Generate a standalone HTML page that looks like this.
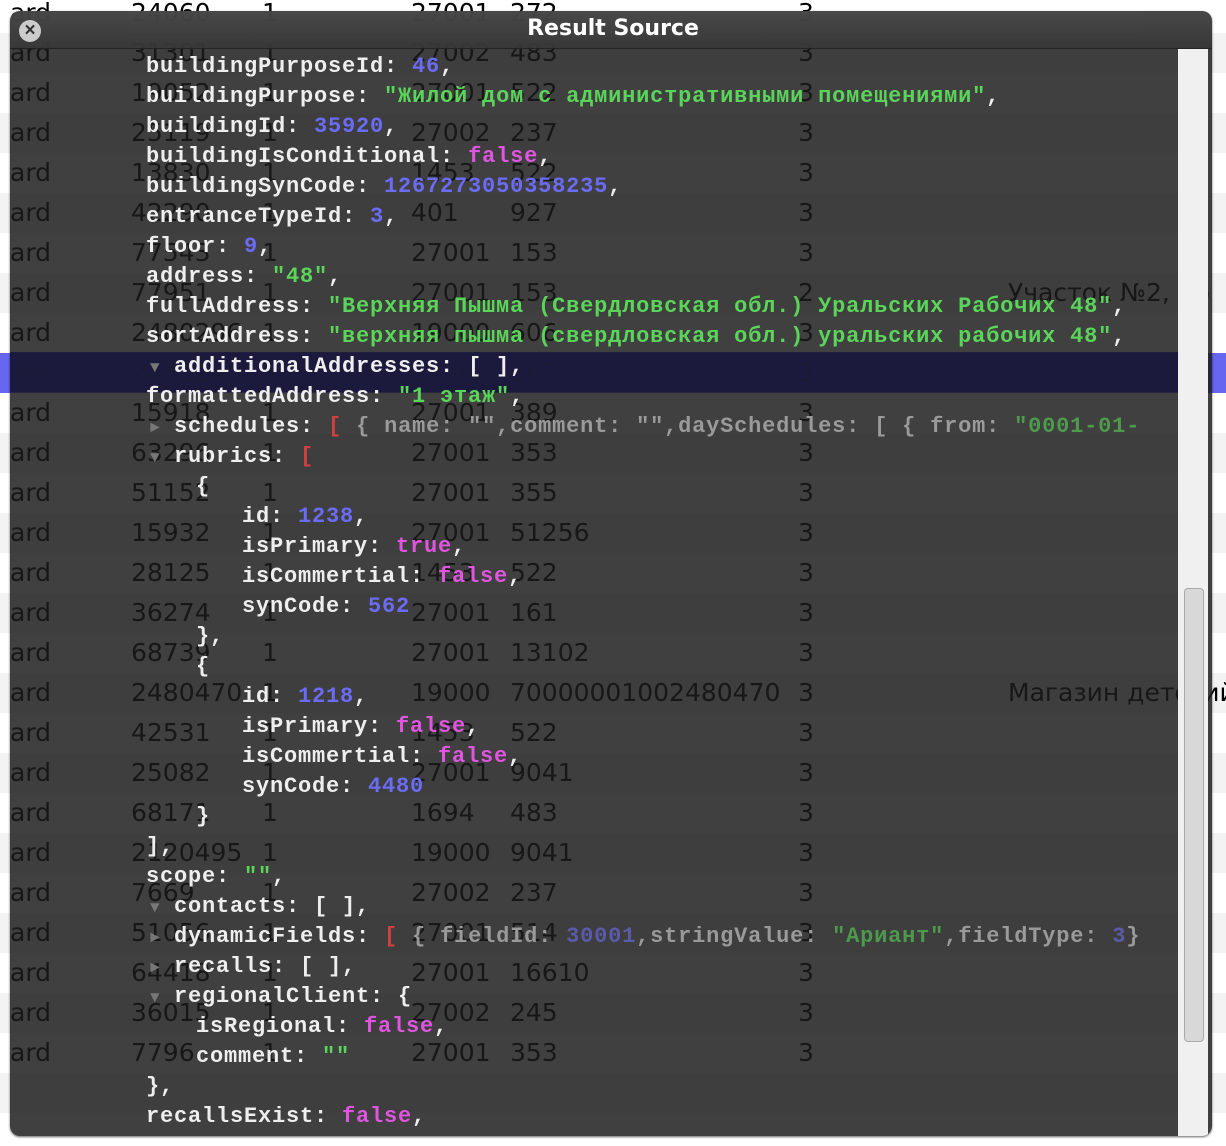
<!DOCTYPE html>
<html><head><meta charset="utf-8"><style>
html,body{margin:0;padding:0;width:1226px;height:1146px;overflow:hidden;background:#fff;position:relative;font-family:"Liberation Sans","Noto Sans CJK SC",sans-serif}
.row{position:absolute;left:0;width:1226px;height:40px;font-family:"DejaVu Sans",sans-serif;font-size:25px;color:#000;line-height:40px}
.row.s{background:#f3f3f3}
.row.h{background:#6666ee}
.row span{position:absolute;top:0;white-space:nowrap}
.win{position:absolute;left:10px;top:11px;width:1202px;height:1125px;border-radius:10px;background:rgba(28,28,28,0.84);box-shadow:0 1px 2px rgba(0,0,0,.6);overflow:hidden}
.tb{position:absolute;left:0;top:0;width:100%;height:37px;background:linear-gradient(#4a4a4a,#383838);opacity:.9;border-bottom:1px solid #222}
.title{position:absolute;left:0;top:0;width:1226px;text-align:center;top:5px;color:#fff;font-weight:bold;font-family:"DejaVu Sans",sans-serif;font-size:22px;margin-left:-10px}
.close{position:absolute;left:9px;top:9px;width:22px;height:22px;border-radius:50%;background:#ccc;color:#333;font-weight:bold;font-size:19px;line-height:22px;text-align:center}
.track{position:absolute;left:1168px;top:38px;width:30px;height:1087px;background:#f0f0f0}
.thumb{position:absolute;left:1174px;top:577px;width:18px;height:452px;background:#d8d8d8;border:1px solid #aaa;border-radius:4px}
.hl{position:absolute;left:0;top:341px;width:1168px;height:40px;background:rgba(27,26,60,0.9)}
.code{position:absolute;left:0;top:0;font-family:"Liberation Mono","Noto Sans CJK SC",monospace;font-size:22px;letter-spacing:0.8px;color:#eee;font-weight:bold}
.code div{position:absolute;white-space:pre;height:30px;line-height:30px}
.n{color:#6b6bf5}.st{color:#5ad55a}.b{color:#e055e0}.g{color:#9a9a9a}.gn{color:#4d9a4d}.gb{color:#5a5aa8}.r{color:#d04040}
.tri{color:#777;font-size:16px}
</style></head><body>
<div class="row" style="top:-7px"><span style="left:10px">ard</span><span style="left:131px">24060</span><span style="left:262px">1</span><span style="left:411px">27001</span><span style="left:510px">272</span><span style="left:798px">3</span></div>
<div class="row s" style="top:33px"><span style="left:10px">ard</span><span style="left:131px">31301</span><span style="left:262px">1</span><span style="left:411px">27002</span><span style="left:510px">483</span><span style="left:798px">3</span></div>
<div class="row" style="top:73px"><span style="left:10px">ard</span><span style="left:131px">19052</span><span style="left:262px">1</span><span style="left:411px">27001</span><span style="left:510px">522</span><span style="left:798px">3</span></div>
<div class="row s" style="top:113px"><span style="left:10px">ard</span><span style="left:131px">25119</span><span style="left:262px">1</span><span style="left:411px">27002</span><span style="left:510px">237</span><span style="left:798px">3</span></div>
<div class="row" style="top:153px"><span style="left:10px">ard</span><span style="left:131px">13830</span><span style="left:262px">1</span><span style="left:411px">1453</span><span style="left:510px">522</span><span style="left:798px">3</span></div>
<div class="row s" style="top:193px"><span style="left:10px">ard</span><span style="left:131px">42290</span><span style="left:262px">1</span><span style="left:411px">401</span><span style="left:510px">927</span><span style="left:798px">3</span></div>
<div class="row" style="top:233px"><span style="left:10px">ard</span><span style="left:131px">77543</span><span style="left:262px">1</span><span style="left:411px">27001</span><span style="left:510px">153</span><span style="left:798px">3</span></div>
<div class="row s" style="top:273px"><span style="left:10px">ard</span><span style="left:131px">77951</span><span style="left:262px">1</span><span style="left:411px">27001</span><span style="left:510px">153</span><span style="left:798px">2</span><span style="left:1008px">Участок №2, пр</span></div>
<div class="row" style="top:313px"><span style="left:10px">ard</span><span style="left:131px">2480296</span><span style="left:262px">1</span><span style="left:411px">19000</span><span style="left:510px">606</span><span style="left:798px">3</span></div>
<div class="row h" style="top:353px"><span style="left:10px">ard</span><span style="left:131px">2481245</span><span style="left:262px">1</span><span style="left:411px">1238</span><span style="left:510px">562</span><span style="left:798px">3</span></div>
<div class="row" style="top:393px"><span style="left:10px">ard</span><span style="left:131px">15918</span><span style="left:262px">1</span><span style="left:411px">27001</span><span style="left:510px">389</span><span style="left:798px">3</span></div>
<div class="row s" style="top:433px"><span style="left:10px">ard</span><span style="left:131px">63296</span><span style="left:262px">1</span><span style="left:411px">27001</span><span style="left:510px">353</span><span style="left:798px">3</span></div>
<div class="row" style="top:473px"><span style="left:10px">ard</span><span style="left:131px">51152</span><span style="left:262px">1</span><span style="left:411px">27001</span><span style="left:510px">355</span><span style="left:798px">3</span></div>
<div class="row s" style="top:513px"><span style="left:10px">ard</span><span style="left:131px">15932</span><span style="left:262px">1</span><span style="left:411px">27001</span><span style="left:510px">51256</span><span style="left:798px">3</span></div>
<div class="row" style="top:553px"><span style="left:10px">ard</span><span style="left:131px">28125</span><span style="left:262px">1</span><span style="left:411px">1453</span><span style="left:510px">522</span><span style="left:798px">3</span></div>
<div class="row s" style="top:593px"><span style="left:10px">ard</span><span style="left:131px">36274</span><span style="left:262px">1</span><span style="left:411px">27001</span><span style="left:510px">161</span><span style="left:798px">3</span></div>
<div class="row" style="top:633px"><span style="left:10px">ard</span><span style="left:131px">68739</span><span style="left:262px">1</span><span style="left:411px">27001</span><span style="left:510px">13102</span><span style="left:798px">3</span></div>
<div class="row s" style="top:673px"><span style="left:10px">ard</span><span style="left:131px">2480470</span><span style="left:262px">1</span><span style="left:411px">19000</span><span style="left:510px">70000001002480470</span><span style="left:798px">3</span><span style="left:1008px">Магазин детский</span></div>
<div class="row" style="top:713px"><span style="left:10px">ard</span><span style="left:131px">42531</span><span style="left:262px">1</span><span style="left:411px">1453</span><span style="left:510px">522</span><span style="left:798px">3</span></div>
<div class="row s" style="top:753px"><span style="left:10px">ard</span><span style="left:131px">25082</span><span style="left:262px">1</span><span style="left:411px">27001</span><span style="left:510px">9041</span><span style="left:798px">3</span></div>
<div class="row" style="top:793px"><span style="left:10px">ard</span><span style="left:131px">68171</span><span style="left:262px">1</span><span style="left:411px">1694</span><span style="left:510px">483</span><span style="left:798px">3</span></div>
<div class="row s" style="top:833px"><span style="left:10px">ard</span><span style="left:131px">2120495</span><span style="left:262px">1</span><span style="left:411px">19000</span><span style="left:510px">9041</span><span style="left:798px">3</span></div>
<div class="row" style="top:873px"><span style="left:10px">ard</span><span style="left:131px">7669</span><span style="left:262px">1</span><span style="left:411px">27002</span><span style="left:510px">237</span><span style="left:798px">3</span></div>
<div class="row s" style="top:913px"><span style="left:10px">ard</span><span style="left:131px">51056</span><span style="left:262px">1</span><span style="left:411px">27001</span><span style="left:510px">514</span><span style="left:798px">3</span></div>
<div class="row" style="top:953px"><span style="left:10px">ard</span><span style="left:131px">64418</span><span style="left:262px">1</span><span style="left:411px">27001</span><span style="left:510px">16610</span><span style="left:798px">3</span></div>
<div class="row s" style="top:993px"><span style="left:10px">ard</span><span style="left:131px">36015</span><span style="left:262px">1</span><span style="left:411px">27002</span><span style="left:510px">245</span><span style="left:798px">3</span></div>
<div class="row" style="top:1033px"><span style="left:10px">ard</span><span style="left:131px">7796</span><span style="left:262px">1</span><span style="left:411px">27001</span><span style="left:510px">353</span><span style="left:798px">3</span></div>
<div class="row s" style="top:1073px"></div>
<div class="row" style="top:1113px"></div>

<div class="win">
  <div class="tb"></div>
  <div class="title">Result Source</div>
  <div class="close">×</div>
  <div class="hl"></div>
  <div class="track"></div>
  <div class="thumb"></div>
  <div class="code">
    <div style="left:136px;top:41px">buildingPurposeId: <span class="n">46</span>,</div>
    <div style="left:136px;top:71px">buildingPurpose: <span class="st">"Жилой дом с административными помещениями"</span>,</div>
    <div style="left:136px;top:101px">buildingId: <span class="n">35920</span>,</div>
    <div style="left:136px;top:131px">buildingIsConditional: <span class="b">false</span>,</div>
    <div style="left:136px;top:161px">buildingSynCode: <span class="n">1267273050358235</span>,</div>
    <div style="left:136px;top:191px">entranceTypeId: <span class="n">3</span>,</div>
    <div style="left:136px;top:221px">floor: <span class="n">9</span>,</div>
    <div style="left:136px;top:251px">address: <span class="st">"48"</span>,</div>
    <div style="left:136px;top:281px">fullAddress: <span class="st">"Верхняя Пышма (Свердловская обл.) Уральских Рабочих 48"</span>,</div>
    <div style="left:136px;top:311px">sortAddress: <span class="st">"верхняя пышма (свердловская обл.) уральских рабочих 48"</span>,</div>
    <div style="left:140px;top:341px"><span class="tri">▼</span></div>
    <div style="left:164px;top:341px">additionalAddresses: [ ],</div>
    <div style="left:136px;top:371px">formattedAddress: <span class="st">"1 этаж"</span>,</div>
    <div style="left:140px;top:401px"><span class="tri">►</span></div>
    <div style="left:164px;top:401px">schedules: <span class="r">[</span> <span class="g">{ name: "",comment: "",daySchedules: [ { from: <span class="gn">"0001-01-</span></span></div>
    <div style="left:140px;top:431px"><span class="tri">▼</span></div>
    <div style="left:164px;top:431px">rubrics: <span class="r">[</span></div>
    <div style="left:186px;top:461px">{</div>
    <div style="left:232px;top:491px">id: <span class="n">1238</span>,</div>
    <div style="left:232px;top:521px">isPrimary: <span class="b">true</span>,</div>
    <div style="left:232px;top:551px">isCommertial: <span class="b">false</span>,</div>
    <div style="left:232px;top:581px">synCode: <span class="n">562</span></div>
    <div style="left:186px;top:611px">},</div>
    <div style="left:186px;top:641px">{</div>
    <div style="left:232px;top:671px">id: <span class="n">1218</span>,</div>
    <div style="left:232px;top:701px">isPrimary: <span class="b">false</span>,</div>
    <div style="left:232px;top:731px">isCommertial: <span class="b">false</span>,</div>
    <div style="left:232px;top:761px">synCode: <span class="n">4480</span></div>
    <div style="left:186px;top:791px">}</div>
    <div style="left:136px;top:821px">],</div>
    <div style="left:136px;top:851px">scope: <span class="st">""</span>,</div>
    <div style="left:140px;top:881px"><span class="tri">▼</span></div>
    <div style="left:164px;top:881px">contacts: [ ],</div>
    <div style="left:140px;top:911px"><span class="tri">►</span></div>
    <div style="left:164px;top:911px">dynamicFields: <span class="r">[</span> <span class="g">{ fieldId: <span class="gb">30001</span>,stringValue: <span class="gn">"Ариант"</span>,fieldType: <span class="gb">3</span>}</span></div>
    <div style="left:140px;top:941px"><span class="tri">►</span></div>
    <div style="left:164px;top:941px">recalls: [ ],</div>
    <div style="left:140px;top:971px"><span class="tri">▼</span></div>
    <div style="left:164px;top:971px">regionalClient: {</div>
    <div style="left:186px;top:1001px">isRegional: <span class="b">false</span>,</div>
    <div style="left:186px;top:1031px">comment: <span class="st">""</span></div>
    <div style="left:136px;top:1061px">},</div>
    <div style="left:136px;top:1091px">recallsExist: <span class="b">false</span>,</div>
  </div>
</div>
</body></html>
